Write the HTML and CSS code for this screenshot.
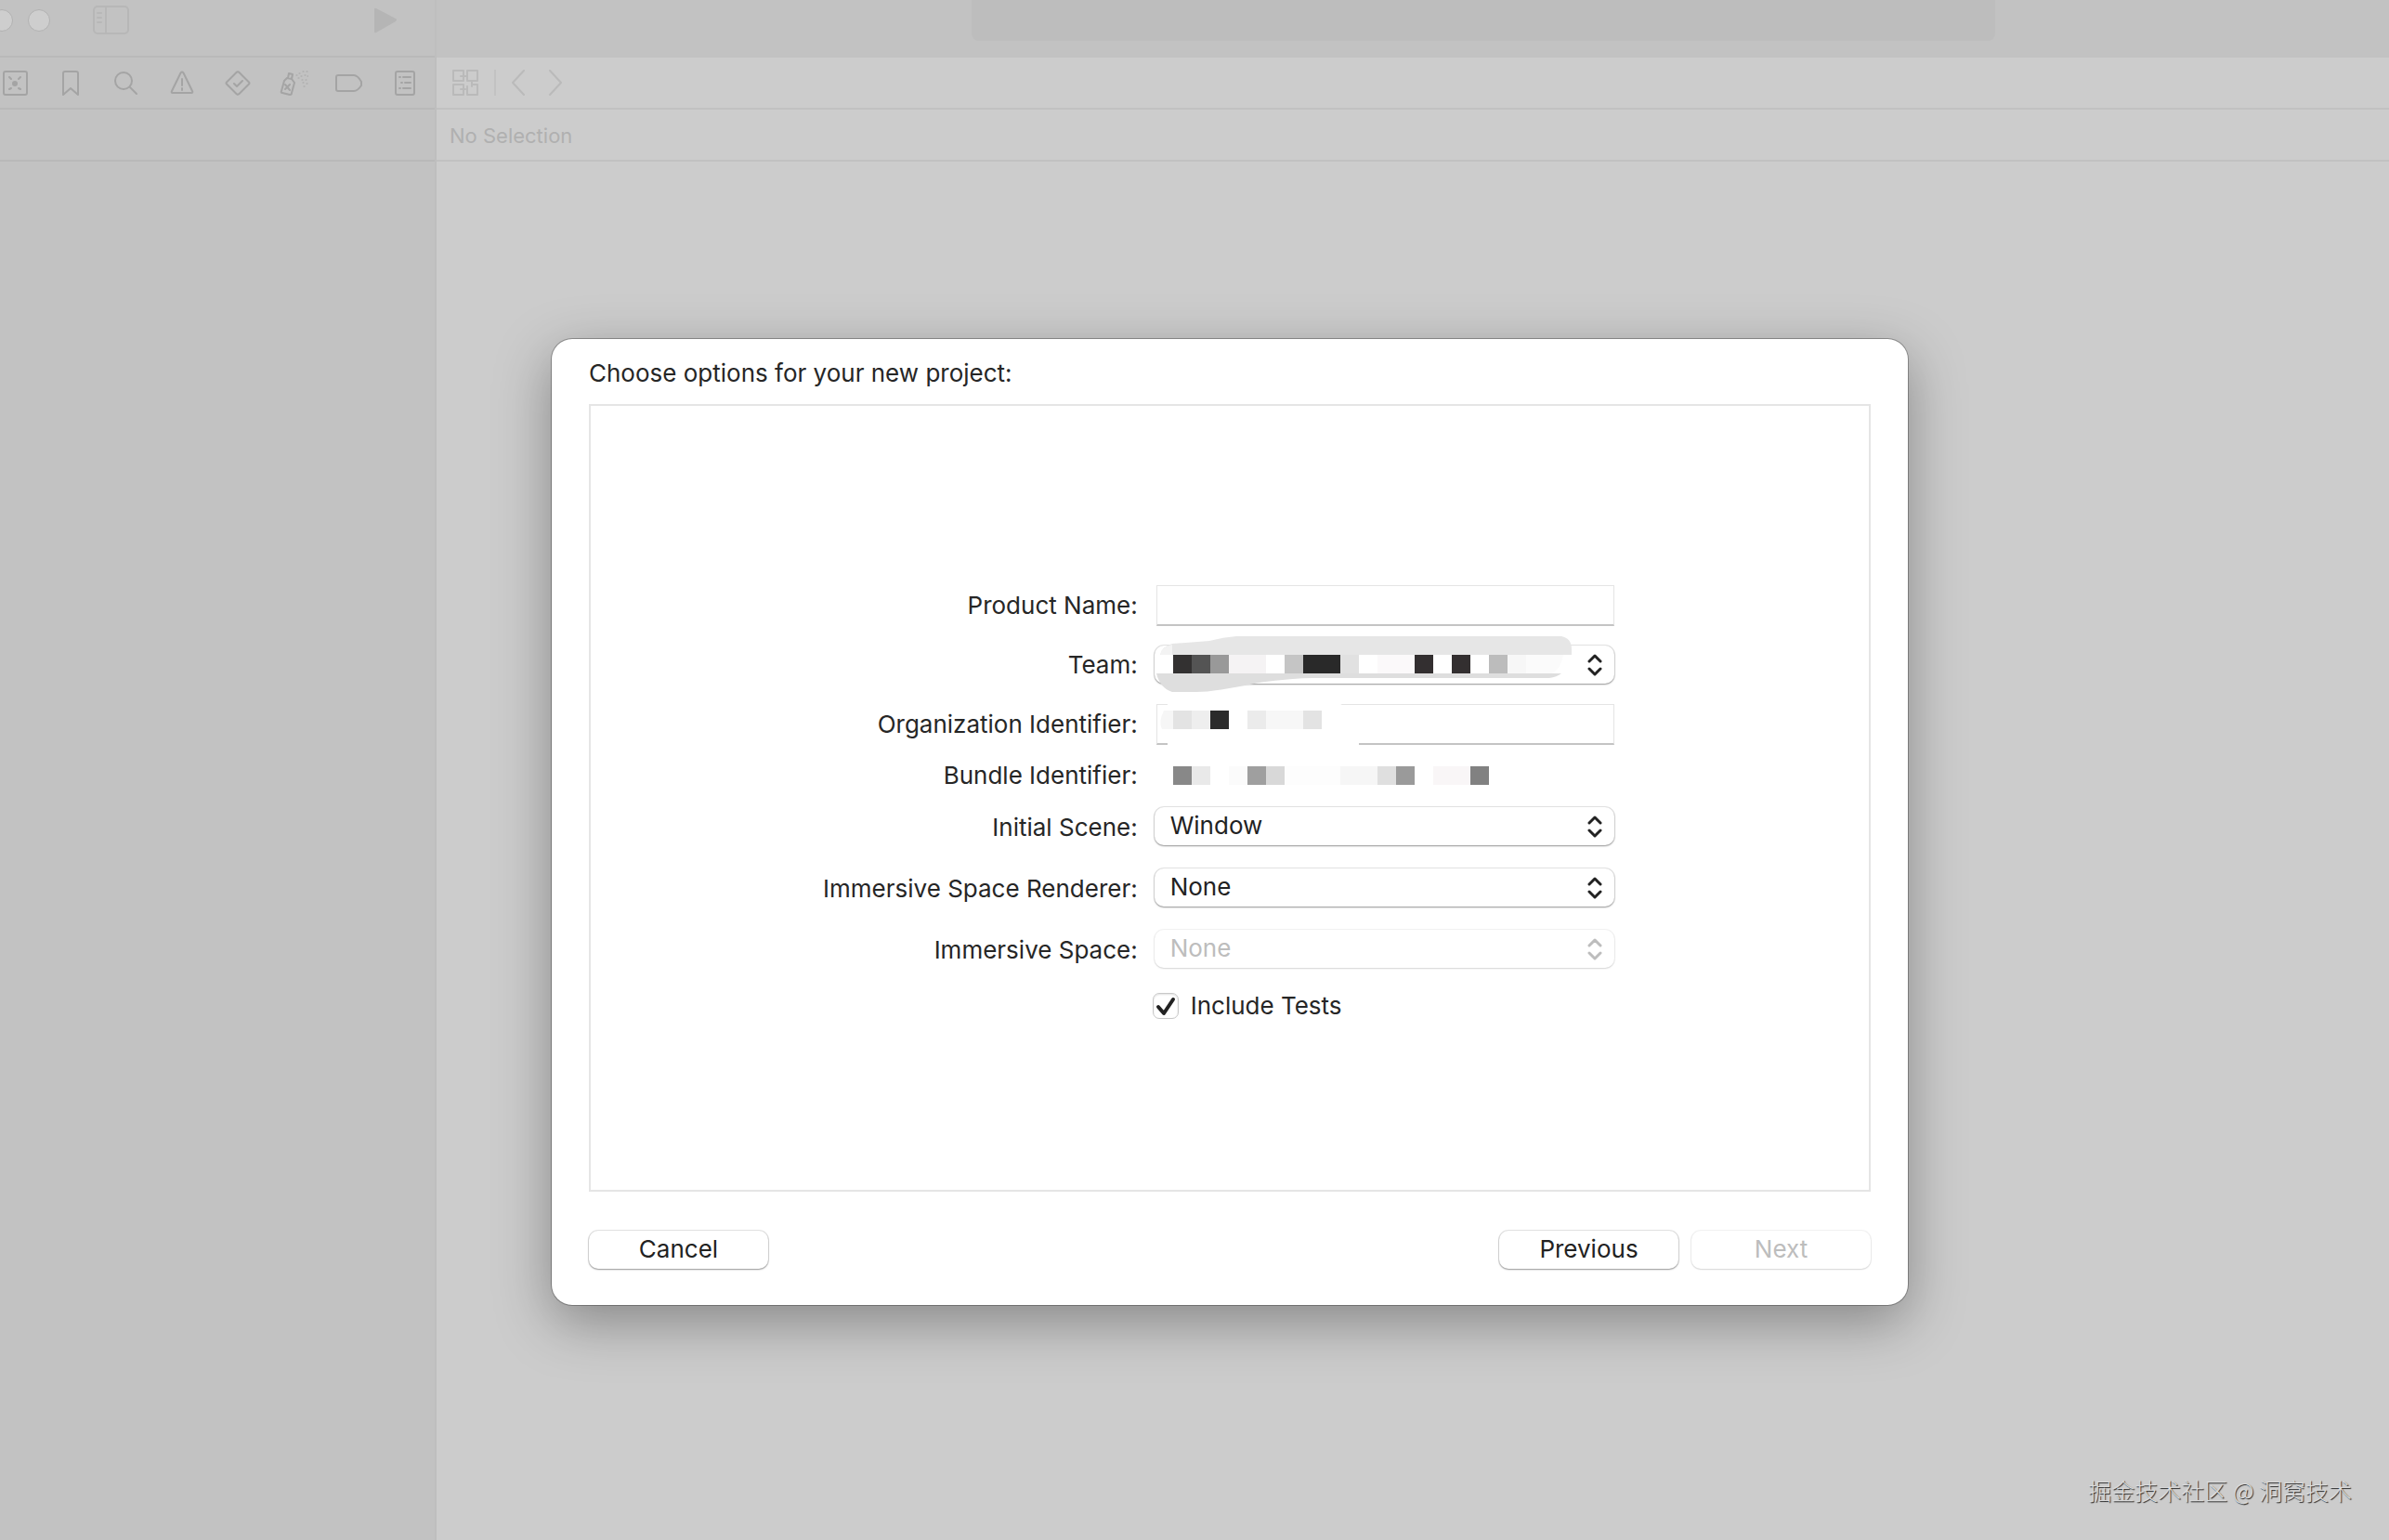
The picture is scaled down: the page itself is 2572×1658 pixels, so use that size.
FILE: index.html
```html
<!doctype html>

<html lang="en">

<head>
  <meta charset="utf-8">
  <meta name="viewport" content="width=device-width, initial-scale=1">
  <title>New Project</title>
  <link rel="stylesheet" href="styles.css">
</head>

<body>
  <div class="window">
    <aside class="navigator">
      <div class="titlebar">
        <span class="light"></span>
        <span class="light"></span>
        <svg class="titlebar-toggle" width="40" height="32" viewBox="0 0 40 32">
          <rect x="1" y="1" width="37" height="29" rx="4" />
          <path d="M14 1v29M5 8h4M5 13h4M5 18h4" />
        </svg>
        <svg class="titlebar-run" width="28" height="28" viewBox="0 0 28 28">
          <path d="M1 2q0-2 2-1l21 11q2 1 0 3L3 27q-2 1-2-1z" />
        </svg>
      </div>
      <nav class="navigator-tabs">
        <svg viewBox="0 0 32 32">
          <rect x="4" y="4" width="25" height="25" rx="2" />
          <circle class="solid" cx="16" cy="17" r="3" />
          <path d="M10 10l2 2M22 10l-2 2M10 23l2-1M22 23l-2-1" />
        </svg>
        <svg viewBox="0 0 32 32">
          <path d="M8 29V6q0-2 2-2h12q2 0 2 2v23l-8-7z" />
        </svg>
        <svg viewBox="0 0 32 32">
          <circle cx="13" cy="14" r="9" />
          <path d="M20 21l7 7" />
        </svg>
        <svg viewBox="0 0 32 32">
          <path d="M14.5 5.500q1.500-2 3 0L27 25q1 2-1 2H6q-2 0-1-2z" />
          <path d="M16 12v7M16 22v2" />
        </svg>
        <svg viewBox="0 0 32 32">
          <path d="M14.500 5q1.500-1.500 3 0L28 15.500q1 1 0 2L17.500 28q-1.500 1.500-3 0L4 17.500q-1-1 0-2zM12 17l3 3 6-6" />
        </svg>
        <svg viewBox="0 0 32 32">
          <path d="M6 14l3-3 5 1 3 4-3 11q0 2-2 2l-8-2q-2 0-1-2zM10 11l1-5 4 1-1 5" />
          <path class="nozzle" d="M7 18l5 6M12 18l-5 5" />
          <path class="spray" d="M19 8h1M22 6h1M26 4h1M30 4h1M21 11h1M24 9h1M28 8h1M31 9h1M25 13h1M29 13h1M26 16h1M30 17h1M27 20h1" />
        </svg>
        <svg viewBox="0 0 32 32">
          <path d="M4 8h17q4 0 8 7v4q-4 6-8 6H4q-2 0-2-2V10q0-2 2-2z" />
        </svg>
        <svg viewBox="0 0 32 32">
          <rect x="6" y="4" width="20" height="25" rx="2" />
          <path d="M10 10h1M14 10h8M12 16h1M16 16h6M10 22h1M14 22h8" />
        </svg>
      </nav>
      <div class="navigator-filter"></div>
    </aside>

    <main class="editor">
      <div class="toolbar">
        <div class="activity"></div>
      </div>
      <div class="editor-tabs">
        <svg width="28" height="28" viewBox="0 0 28 28">
          <path d="M1 1h11v11H1zM16 1h11v11H16zM1 16h11v11H1zM16 18v9h11V16h-6M13 7h3M9 21h5M21 12v6M9 7h3" />
        </svg>
        <span class="divider"></span>
        <svg width="16" height="28" viewBox="0 0 16 28">
          <path d="M14 1L2 14l12 13" />
        </svg>
        <svg width="16" height="28" viewBox="0 0 16 28">
          <path d="M2 1l12 13L2 27" />
        </svg>
      </div>
      <div class="jump-bar">No Selection</div>
    </main>
  </div>

  <div class="overlay">
    <form class="sheet">
      <h1 class="sheet-title">Choose options for your new project:</h1>

      <div class="options">
        <label for="product">Product Name:</label>
        <div class="field">
          <input class="text" id="product" type="text">
        </div>

        <label for="team">Team:</label>
        <div class="field">
          <select class="popup" id="team">
            <option></option>
          </select>
          <svg class="arrows" viewBox="0 0 16 24"><path d="M2 8l6-6 6 6M2 16l6 6 6-6" /></svg>
          <svg class="redacted redacted-team" width="460" height="66" viewBox="0 0 460 66">
            <path fill="#e6e6e6" d="M6 24Q8 15 19 12L59 9Q74 5 88 4H438Q449 6 449 18V24z" />
            <path fill="#f3f3f3" d="M6 24Q8 15 19 13V24z" />
            <path fill="#dedede" d="M2 44Q6 60 19 64H45Q65 64 112 54Q150 49 170 49H425Q433 48 438 44z" />
            <path fill="#fff" d="M2 24h438v20H2z" />
            <path fill="#333131" d="M20 24h20v20H20z" />
            <path fill="#545454" d="M40 24h20v20H40z" />
            <path fill="#999" d="M60 24h20v20H60z" />
            <path fill="#f5f3f4" d="M80 24h40v20H80z" />
            <path fill="#c5c5c5" d="M140 24h20v20h-20z" />
            <path fill="#292929" d="M160 24h40v20h-40z" />
            <path fill="#e1e1e1" d="M200 24h20v20h-20z" />
            <path fill="#fbf9fa" d="M240 24h40v20h-40z" />
            <path fill="#332f30" d="M280 24h20v20h-20zM320 24h20v20h-20z" />
            <path fill="#bcbcbc" d="M360 24h20v20h-20z" />
            <path fill="#f7f7f7" d="M380 24h20v20h-20z" />
            <path fill="#fbfbfb" d="M400 24h40q-2 14-12 20h-28z" />
          </svg>
        </div>

        <label for="organization">Organization Identifier:</label>
        <div class="field">
          <input class="text" id="organization" type="text">
          <svg class="redacted" width="220" height="46" viewBox="0 0 220 46">
            <path fill="#fff" d="M14 0h186l20 10v36H14z" />
            <path fill="#f6f6f6" d="M10 7h10v20H8q-4-8 2-20z" />
            <path fill="#e3e3e3" d="M20 7h20v20H20zM160 7h20v20h-20z" />
            <path fill="#eee" d="M40 7h20v20H40z" />
            <path fill="#2b2b2b" d="M60 7h20v20H60z" />
            <path fill="#ebebeb" d="M100 7h20v20h-20z" />
            <path fill="#f7f7f7" d="M120 7h40v20h-40z" />
          </svg>
        </div>

        <span class="label">Bundle Identifier:</span>
        <div class="field">
          <svg class="redacted" width="380" height="26" viewBox="0 0 380 26">
            <path fill="#888" d="M20 3h20v20H20z" />
            <path fill="#e9e9e9" d="M40 3h20v20H40z" />
            <path fill="#fbfbfb" d="M80 3h20v20H80z" />
            <path fill="#9f9f9f" d="M100 3h20v20h-20z" />
            <path fill="#d8d8d8" d="M120 3h20v20h-20z" />
            <path fill="#fdfdfd" d="M140 3h60v20h-60z" />
            <path fill="#f6f6f6" d="M200 3h40v20h-40z" />
            <path fill="#dfdfdf" d="M240 3h20v20h-20z" />
            <path fill="#9a9a9a" d="M260 3h20v20h-20z" />
            <path fill="#f9f6f7" d="M300 3h40v20h-40z" />
            <path fill="#818181" d="M340 3h20v20h-20z" />
          </svg>
        </div>

        <label for="scene">Initial Scene:</label>
        <div class="field">
          <select class="popup" id="scene">
            <option>Window</option>
          </select>
          <svg class="arrows" viewBox="0 0 16 24"><path d="M2 8l6-6 6 6M2 16l6 6 6-6" /></svg>
        </div>

        <label for="renderer">Immersive Space Renderer:</label>
        <div class="field">
          <select class="popup" id="renderer">
            <option>None</option>
          </select>
          <svg class="arrows" viewBox="0 0 16 24"><path d="M2 8l6-6 6 6M2 16l6 6 6-6" /></svg>
        </div>

        <label for="space">Immersive Space:</label>
        <div class="field">
          <select class="popup" id="space" disabled>
            <option>None</option>
          </select>
          <svg class="arrows" viewBox="0 0 16 24"><path d="M2 8l6-6 6 6M2 16l6 6 6-6" /></svg>
        </div>

        <div class="check">
          <span class="check-box">
            <input id="tests" type="checkbox" checked>
            <svg class="check-mark" viewBox="0 0 28 28"><path d="M6 15l6 7L22 7" /></svg>
          </span>
          <label for="tests">Include Tests</label>
        </div>
      </div>

      <div class="actions">
        <button class="cancel" type="button">Cancel</button>
        <button type="button">Previous</button>
        <button type="submit" disabled>Next</button>
      </div>
    </form>
  </div>

  <div class="watermark" lang="zh">掘金技术社区 @ 洞窝技术</div>
</body>

</html>
```

FILE: styles.css
```css
* {
  box-sizing: border-box;
}

body {
  margin: 0;
  position: relative;
  min-height: 100vh;
  overflow: hidden;
  font-family: Inter, "Noto Sans CJK SC", sans-serif;
  font-size: 26px;
  line-height: 32px;
  color: #262626;
}

svg {
  display: block;
  flex: none;
  fill: none;
  stroke-linecap: round;
  stroke-linejoin: round;
}

.window {
  display: flex;
  min-height: 100vh;
}

/* Left column */

.navigator {
  flex: none;
  width: 470px;
  background: #c2c2c2;
  border-right: 2px solid #bebebe;
}

.titlebar {
  display: flex;
  align-items: center;
  height: 62px;
  padding: 0 38px 17px 0;
  border-bottom: 2px solid #b9b9b9;
}

.light {
  flex: none;
  width: 24px;
  height: 24px;
  margin-right: 16px;
  border: 1px solid #b2b2b2;
  border-radius: 50%;
  background: #cecece;
}

.light:first-child {
  margin-left: -10px;
}

.titlebar-toggle {
  margin-left: 30px;
  stroke: #b7b7b7;
  stroke-width: 2;
}

.titlebar-run {
  margin-left: auto;
  fill: #b5b5b5;
}

.navigator-tabs {
  display: flex;
  align-items: center;
  gap: 28px;
  height: 56px;
  border-bottom: 2px solid #b9b9b9;
}

.navigator-tabs svg {
  width: 32px;
  height: 32px;
  stroke: #a4a4a4;
  stroke-width: 2;
}

.navigator-tabs .solid {
  fill: #a4a4a4;
  stroke: none;
}

.navigator-tabs .spray {
  stroke-width: 1;
}

.navigator-filter {
  height: 56px;
  border-bottom: 2px solid #b9b9b9;
}

/* Editor area */

.editor {
  flex: 1;
  background: #ccc;
}

.toolbar {
  display: grid;
  grid-template-columns: 576fr 1102fr 424fr;
  height: 62px;
  background: #c2c2c2;
}

.activity {
  grid-column: 2;
  height: 44px;
  border-radius: 0 0 8px 8px;
  background: #bdbdbd;
}

.editor-tabs {
  display: flex;
  align-items: center;
  height: 56px;
  padding-left: 17px;
  border-bottom: 2px solid #c1c1c1;
}

.editor-tabs svg {
  stroke: #bababa;
  stroke-width: 2;
}

.editor-tabs svg + svg {
  margin-left: 24px;
}

.divider {
  width: 2px;
  height: 28px;
  margin: 0 16px 0 17px;
  background: #c2c2c2;
}

.jump-bar {
  height: 56px;
  padding: 12px 14px;
  border-bottom: 2px solid #c1c1c1;
  font-size: 22px;
  color: #b0b0b0;
}

/* Sheet */

.overlay {
  position: absolute;
  inset: 0;
  display: flex;
  align-items: center;
  justify-content: center;
  padding: 112px 0 0 76px;
}

.sheet {
  width: 1460px;
  padding: 21px 40px 39px;
  border-radius: 22px;
  background: #fff;
  box-shadow: 0 0 0 1px rgba(0, 0, 0, .28), 0 18px 60px rgba(0, 0, 0, .34);
}

.sheet-title {
  margin: 0 0 17px;
  font-size: 26px;
  font-weight: 400;
}

.options {
  display: grid;
  grid-template-columns: 7fr 495px 3fr;
  grid-template-rows: 44px 44px 44px 26px;
  grid-auto-rows: 46px;
  gap: 20px 18px;
  align-items: center;
  min-height: 848px;
  padding: 193px 4px 0 0;
  align-content: start;
  border: 2px solid #e5e5e5;
}

.options > label,
.label {
  grid-column: 1;
  text-align: right;
  white-space: nowrap;
}

.field {
  grid-column: 2;
  position: relative;
  align-self: start;
  display: flex;
}

.text {
  flex: 1;
  height: 44px;
  margin-left: 2px;
  padding: 0 12px;
  border: 1px solid #e4e4e4;
  border-bottom: 2px solid #c4c4c4;
  background: #fff;
  font: inherit;
}

.popup,
button {
  border: 0;
  border-radius: 10px;
  background: #fff;
  box-shadow: 0 0 0 1px rgba(0, 0, 0, .1), 0 1px 2px rgba(0, 0, 0, .35);
  font: inherit;
  color: #222;
}

.popup {
  appearance: none;
  flex: 1;
  height: 41px;
  margin-top: 1px;
  padding: 0 40px 2px 17px;
}

.popup:disabled,
button:disabled {
  box-shadow: 0 0 0 1px rgba(0, 0, 0, .05), 0 1px 2px rgba(0, 0, 0, .12);
  color: #bdbdbd;
  opacity: 1;
}

.arrows {
  position: absolute;
  top: 10px;
  right: 13px;
  width: 16px;
  height: 24px;
  stroke: #222;
  stroke-width: 3;
  pointer-events: none;
}

.popup:disabled + .arrows {
  stroke: #bdbdbd;
}

.redacted {
  position: absolute;
  top: 0;
  left: 0;
}

.redacted-team {
  top: -13px;
}

.check {
  grid-column: 2;
  display: flex;
  align-items: center;
  align-self: start;
  gap: 13px;
  height: 34px;
}

.check-box {
  position: relative;
  width: 28px;
  height: 28px;
  margin-left: -2px;
}

.check-box input {
  appearance: none;
  display: block;
  width: 28px;
  height: 28px;
  margin: 0;
  border: 1px solid #c8c8c8;
  border-radius: 7px;
  background: #fff;
  box-shadow: inset 0 1px 2px rgba(0, 0, 0, .12);
}

.check-mark {
  position: absolute;
  inset: 0;
  stroke: #222;
  stroke-width: 4;
  visibility: hidden;
  pointer-events: none;
}

.check-box input:checked + .check-mark {
  visibility: visible;
}

.actions {
  display: flex;
  gap: 14px;
  margin-top: 42px;
}

button {
  width: 193px;
  height: 41px;
  padding: 0 0 2px;
}

.cancel {
  margin-right: auto;
}

.watermark {
  position: absolute;
  right: 40px;
  bottom: 38px;
  font-family: "Noto Sans CJK SC", sans-serif;
  font-size: 25px;
  font-weight: 300;
  color: #dcdcdc;
  text-shadow: 1px 1px 1px #222;
}
```
